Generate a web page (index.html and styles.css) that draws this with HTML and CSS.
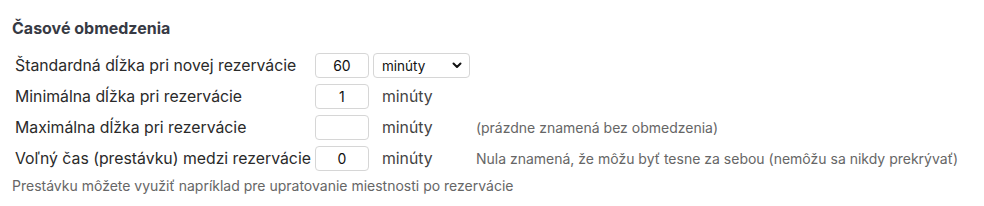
FILE: index.html
```html
<!DOCTYPE html>
<html lang="sk">
<head>
    <meta charset="UTF-8">
    <meta name="viewport" content="width=device-width, initial-scale=1.0">
    <title>Časové obmedzenia</title>
    <link rel="stylesheet" href="styles.css">
</head>
<body>
    <div class="section">
        <h3>Časové obmedzenia</h3>
        <table class="limits">
            <tr>
                <td class="label">Štandardná dĺžka pri novej rezervácie</td>
                <td><input type="text" class="num" value="60"></td>
                <td>
                    <div class="select">
                        <span>minúty</span>
                        <svg width="10" height="7" viewBox="0 0 10 7"><path d="M1.5 1.5 L5 5 L8.5 1.5" fill="none" stroke="#111" stroke-width="2" stroke-linecap="round" stroke-linejoin="round"/></svg>
                    </div>
                </td>
                <td></td>
            </tr>
            <tr>
                <td class="label">Minimálna dĺžka pri rezervácie</td>
                <td><input type="text" class="num" value="1"></td>
                <td class="unit">minúty</td>
                <td></td>
            </tr>
            <tr>
                <td class="label">Maximálna dĺžka pri rezervácie</td>
                <td><input type="text" class="num" value=""></td>
                <td class="unit">minúty</td>
                <td class="hint">(prázdne znamená bez obmedzenia)</td>
            </tr>
            <tr>
                <td class="label">Voľný čas (prestávku) medzi rezervácie</td>
                <td><input type="text" class="num" value="0"></td>
                <td class="unit">minúty</td>
                <td class="hint">Nula znamená, že môžu byť tesne za sebou (nemôžu sa nikdy prekrývať)</td>
            </tr>
        </table>
        <p class="note">Prestávku môžete využiť napríklad pre upratovanie miestnosti po rezervácie</p>
    </div>
</body>
</html>
```

FILE: styles.css
```css
body {
    font-family: Inter, "Noto Sans", Arial, sans-serif;
    margin: 0;
    padding: 0 12px;
    background-color: #fff;
    color: #222;
}
h3 {
    font-size: 16px;
    line-height: 19px;
    font-weight: 700;
    color: #373a44;
    margin: 19px 0 12px 0;
}
.limits {
    border-collapse: collapse;
}
.limits td {
    padding: 3px 2px;
    font-size: 15.8px;
    vertical-align: middle;
    white-space: nowrap;
}
.limits .label {
    color: #2a2a2a;
    padding-left: 3px;
}
.num {
    width: 54px;
    height: 25px;
    box-sizing: border-box;
    border: 1px solid #d6d6d6;
    border-radius: 4px;
    text-align: center;
    font-family: inherit;
    font-size: 14px;
    color: #111;
    padding: 0;
}
.select {
    width: 97px;
    height: 25px;
    box-sizing: border-box;
    border: 1px solid #d6d6d6;
    border-radius: 4px;
    display: flex;
    align-items: center;
    justify-content: space-between;
    padding: 0 7px 0 8px;
    font-size: 13.5px;
    color: #111;
}
.limits .unit {
    color: #444;
    padding-left: 11px;
}
.limits .hint {
    font-size: 14px;
    color: #666;
    padding-left: 4px;
}
.note {
    font-size: 14px;
    color: #666;
    margin: 3px 0 0 0;
}
```
